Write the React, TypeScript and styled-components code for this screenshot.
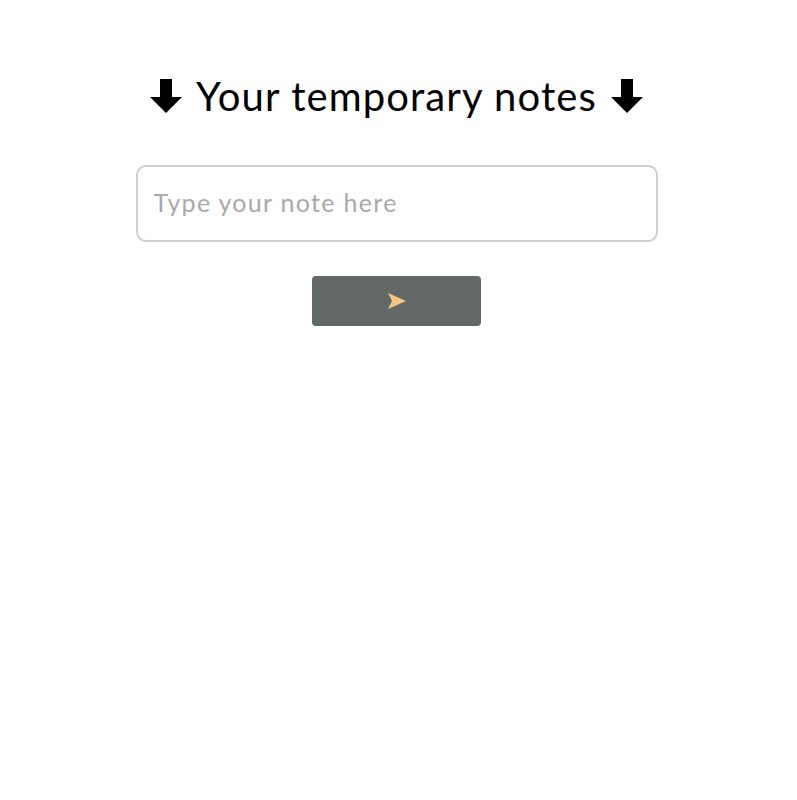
import React from "react";
import styled, { createGlobalStyle } from "styled-components";

const Global = createGlobalStyle`
  html, body { margin: 0; padding: 0; background: #fff; }
  body { font-family: Lato, "Noto Sans", sans-serif; }
`;

const Page = styled.main`
  display: flex;
  flex-direction: column;
  align-items: center;
  padding-top: 72px;
  padding-right: 4px;
`;

const Title = styled.h1`
  display: flex;
  align-items: center;
  gap: 14px;
  margin: 0;
  font-family: Lato, "Noto Sans", sans-serif;
  font-weight: 400;
  font-size: 40px;
  letter-spacing: 1.1px;
  line-height: 48px;
  color: #000;
`;

const Form = styled.form`
  display: flex;
  flex-direction: column;
  align-items: center;
  margin-top: 45px;
  gap: 34px;
`;

const Input = styled.input`
  box-sizing: border-box;
  width: 522px;
  height: 77px;
  border: 2px solid #cfcfcf;
  border-radius: 10px;
  padding: 0 16px 3px;
  font-family: Lato, "Noto Sans", sans-serif;
  font-size: 25px;
  letter-spacing: 1.3px;
  color: #333;
  outline: none;
  &::placeholder { color: #a9a9a9; }
`;

const SendButton = styled.button`
  width: 169px;
  height: 50px;
  border: none;
  border-radius: 4px;
  background: #626966;
  display: flex;
  align-items: center;
  justify-content: center;
  cursor: pointer;
  padding: 0;
`;

const Arrow = () => (
  <svg width="32" height="34" viewBox="0 0 32 34">
    <path d="M10 0h12v18h10L16 34 0 18h10z" fill="#000" />
  </svg>
);

const SendIcon = () => (
  <svg width="20" height="18" viewBox="0 0 20 18">
    <path d="M1 1 L19 9 L1 17 L5 9 Z" fill="#f6c484" />
  </svg>
);

export default function App() {
  return (
    <>
      <Global />
      <Page>
        <Title>
          <Arrow />
          Your temporary notes
          <Arrow />
        </Title>
        <Form onSubmit={(e) => e.preventDefault()}>
          <Input placeholder="Type your note here" />
          <SendButton type="submit" aria-label="Send">
            <SendIcon />
          </SendButton>
        </Form>
      </Page>
    </>
  );
}
